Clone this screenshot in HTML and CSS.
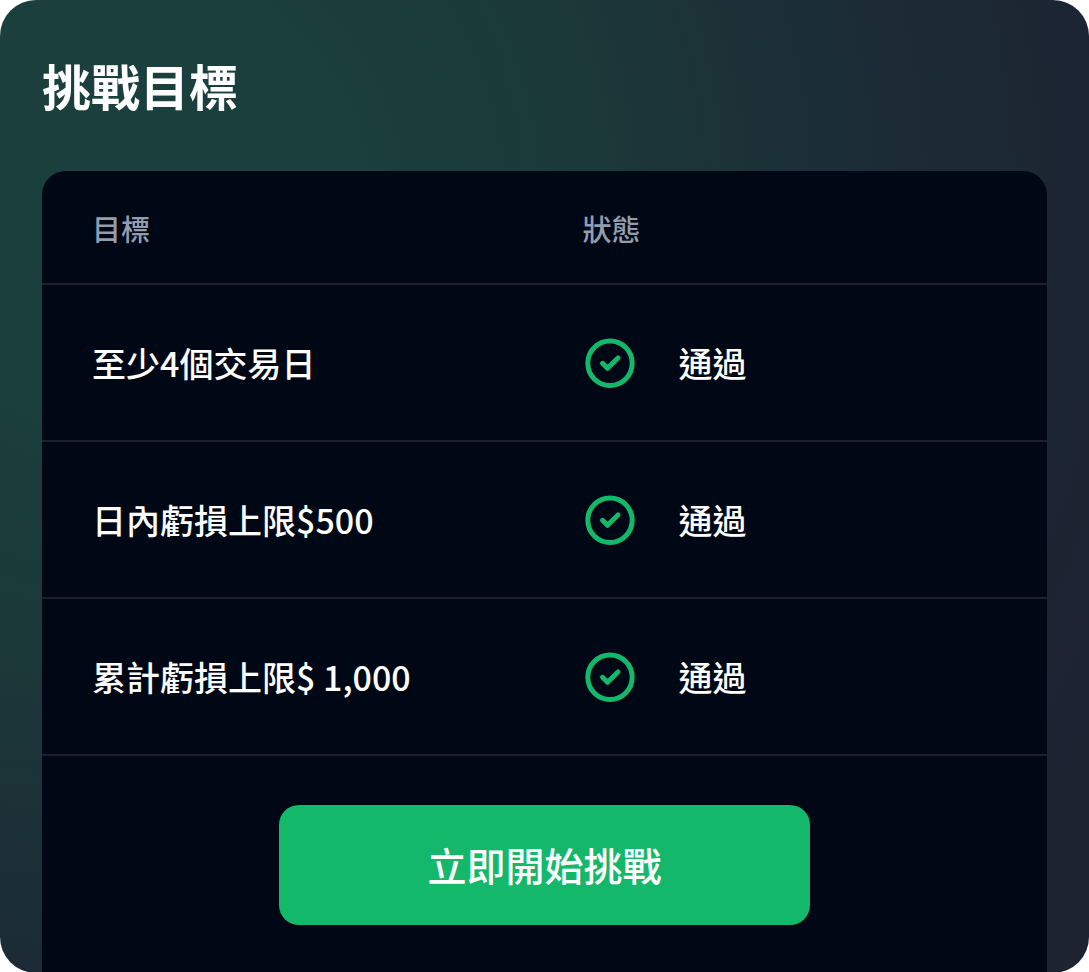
FILE: index.html
```html
<!DOCTYPE html>
<html lang="zh-Hant">
<head>
<meta charset="utf-8">
<meta name="viewport" content="width=device-width, initial-scale=1">
<title>挑戰目標</title>
<link rel="stylesheet" href="styles.css">
</head>
<body>
<main class="card">
  <h1 class="card-title">挑戰目標</h1>
  <section class="panel">
    <table class="goals">
      <thead>
        <tr><th class="goal-column" scope="col">目標</th><th scope="col">狀態</th></tr>
      </thead>
      <tbody>
        <tr>
          <td>至少4個交易日</td>
          <td><div class="status"><svg class="status-icon" viewBox="0 0 56 56" aria-hidden="true"><circle cx="28" cy="28.3" r="22.2"/><path d="M20.5 28.3l5 5L36 23"/></svg><span>通過</span></div></td>
        </tr>
        <tr>
          <td>日內虧損上限$500</td>
          <td><div class="status"><svg class="status-icon" viewBox="0 0 56 56" aria-hidden="true"><circle cx="28" cy="28.3" r="22.2"/><path d="M20.5 28.3l5 5L36 23"/></svg><span>通過</span></div></td>
        </tr>
        <tr>
          <td>累計虧損上限$ 1,000</td>
          <td><div class="status"><svg class="status-icon" viewBox="0 0 56 56" aria-hidden="true"><circle cx="28" cy="28.3" r="22.2"/><path d="M20.5 28.3l5 5L36 23"/></svg><span>通過</span></div></td>
        </tr>
      </tbody>
    </table>
    <div class="actions">
      <button class="start-button" type="button">立即開始挑戰</button>
    </div>
  </section>
</main>
</body>
</html>
```
FILE: styles.css
```css
* {
  box-sizing: border-box;
}

body {
  margin: 0;
  background: #fff;
  color: #fff;
  font-family: "Noto Sans CJK TC", sans-serif;
}

.card {
  display: flex;
  flex-direction: column;
  min-height: 100vh;
  padding: 49px 42px 0;
  border-radius: 36px;
  background: radial-gradient(circle at 130px 200px, #1a3f3c 0, #1a3f3c 220px, #1b3939 440px, #1c2b35 770px, #1c2533 960px, #1e2332 1100px);
}

.card-title {
  margin: 0 0 50px;
  font-size: 49px;
  line-height: 72px;
  font-weight: 700;
}

.panel {
  flex: 1;
  border-radius: 24px 24px 0 0;
  background: #000715;
}

.goals {
  width: 100%;
  table-layout: fixed;
  border-spacing: 0;
}

.goals th,
.goals td {
  padding: 0 48px;
  border-bottom: 2px solid #1a202e;
  text-align: left;
  vertical-align: middle;
}

.goals th:first-child,
.goals td:first-child {
  padding-left: 50px;
}

.goals th {
  height: 114px;
  padding-top: 1px;
  color: #949dae;
  font-size: 29px;
  font-weight: 500;
}

.goals td {
  height: 157px;
  font-size: 34px;
  font-weight: 500;
  white-space: nowrap;
}

.goals .goal-column {
  width: 49%;
}

.status {
  display: flex;
  align-items: center;
  gap: 40px;
}

.status-icon {
  width: 56px;
  height: 56px;
  fill: none;
  stroke: #14b86a;
  stroke-width: 5;
  stroke-linecap: round;
  stroke-linejoin: round;
}

.actions {
  display: flex;
  justify-content: center;
  padding: 49px 24px 48px;
}

.start-button {
  height: 120px;
  padding: 0 148px 2px;
  border: 0;
  border-radius: 20px;
  background: #14b86a;
  color: #fff;
  font: 500 39px "Noto Sans CJK TC", sans-serif;
  cursor: pointer;
}
```
